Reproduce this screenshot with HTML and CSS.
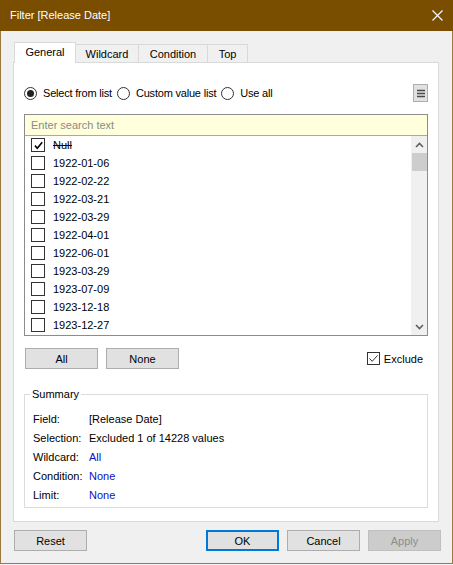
FILE: index.html
```html
<!DOCTYPE html>
<html>
<head>
<meta charset="utf-8">
<link rel="stylesheet" href="styles.css">
</head>
<body>
<div class="window">
  <div class="titlebar">
    <span class="title">Filter [Release Date]</span>
    <svg class="close" width="11" height="11" viewBox="0 0 11 11"><path d="M0.5 0.5L10.5 10.5M10.5 0.5L0.5 10.5" stroke="#fff" stroke-width="1.1" fill="none"/></svg>
  </div>
  <div class="content">
    <div class="tabs">
      <div class="tab tab-general is-active">General</div>
      <div class="tab tab-wildcard">Wildcard</div>
      <div class="tab tab-condition">Condition</div>
      <div class="tab tab-top">Top</div>
    </div>
    <div class="panel">
      <div class="radio-row">
        <label class="radio is-checked"><span class="radio-circle"><span class="radio-dot"></span></span>Select from list</label>
        <label class="radio"><span class="radio-circle"></span>Custom value list</label>
        <label class="radio"><span class="radio-circle"></span>Use all</label>
        <button class="menu-btn"><svg width="8" height="9" viewBox="0 0 8 9"><path d="M0 1.5H8M0 4.5H8M0 7.5H8" stroke="#4a4a4a" stroke-width="1.6"/></svg></button>
      </div>
      <div class="listbox">
        <div class="search">Enter search text</div>
        <div class="list-body">
          <div class="rows">
            <div class="row"><span class="cb"><svg width="11" height="11" viewBox="0 0 11 11"><path d="M2 5.6L4.3 8.2L9.2 2.2" stroke="#000" stroke-width="1.6" fill="none"/></svg></span><span class="strike">Null</span></div>
            <div class="row"><span class="cb"></span>1922-01-06</div>
            <div class="row"><span class="cb"></span>1922-02-22</div>
            <div class="row"><span class="cb"></span>1922-03-21</div>
            <div class="row"><span class="cb"></span>1922-03-29</div>
            <div class="row"><span class="cb"></span>1922-04-01</div>
            <div class="row"><span class="cb"></span>1922-06-01</div>
            <div class="row"><span class="cb"></span>1923-03-29</div>
            <div class="row"><span class="cb"></span>1923-07-09</div>
            <div class="row"><span class="cb"></span>1923-12-18</div>
            <div class="row"><span class="cb"></span>1923-12-27</div>
          </div>
          <div class="scrollbar">
            <span class="arrow"><svg width="9" height="6" viewBox="0 0 9 6"><path d="M1 5L4.5 1.5L8 5" stroke="#606060" stroke-width="1.6" fill="none"/></svg></span>
            <span class="thumb"></span>
            <span class="track"></span>
            <span class="arrow"><svg width="9" height="6" viewBox="0 0 9 6"><path d="M1 1L4.5 4.5L8 1" stroke="#606060" stroke-width="1.6" fill="none"/></svg></span>
          </div>
        </div>
      </div>
      <div class="actions">
        <button class="btn">All</button>
        <button class="btn">None</button>
        <label class="exclude"><span class="cb cb-thin"><svg width="11" height="11" viewBox="0 0 11 11"><path d="M1.5 5.5L4.2 8.3L9.6 2.4" stroke="#333" stroke-width="1" fill="none"/></svg></span>Exclude</label>
      </div>
      <fieldset class="summary">
        <legend>Summary</legend>
        <div class="sum-row"><span class="sum-label">Field:</span><span>[Release Date]</span></div>
        <div class="sum-row"><span class="sum-label">Selection:</span><span>Excluded 1 of 14228 values</span></div>
        <div class="sum-row"><span class="sum-label">Wildcard:</span><span class="link">All</span></div>
        <div class="sum-row"><span class="sum-label">Condition:</span><span class="link">None</span></div>
        <div class="sum-row"><span class="sum-label">Limit:</span><span class="link">None</span></div>
      </fieldset>
    </div>
  </div>
  <div class="footer">
    <button class="btn">Reset</button>
    <span class="grow"></span>
    <button class="btn btn-default">OK</button>
    <button class="btn">Cancel</button>
    <button class="btn btn-disabled">Apply</button>
  </div>
</div>
</body>
</html>
```

FILE: styles.css
```css
html, body {
  margin: 0;
  padding: 0;
  background: #f4f4f4;
}
body {
  font-family: "Liberation Sans", Arial, sans-serif;
  font-size: 11px;
  color: #000;
}
.window {
  width: 453px;
  height: 564px;
  box-sizing: border-box;
  border: 1px solid #9c7a3c;
  border-top: none;
  background: #f0f0f0;
  display: flex;
  flex-direction: column;
}
.titlebar {
  height: 31px;
  margin: 0 -1px;
  background: #7a4e01;
  color: #fff;
  display: flex;
  align-items: center;
  padding: 0 10px 0 10px;
  flex-shrink: 0;
}
.title {
  flex: 1;
  padding-bottom: 1px;
}
.close {
  margin-right: 0;
  margin-bottom: 1px;
}
.content {
  padding: 11px 13px 0 12px;
}
.tabs {
  display: flex;
  align-items: flex-end;
  height: 20px;
  margin-left: 1px;
}
.tab {
  box-sizing: border-box;
  height: 18px;
  border: 1px solid #d9d9d9;
  border-bottom: none;
  background: #f0f0f0;
  display: flex;
  align-items: center;
  justify-content: center;
  margin-left: -1px;
  padding-top: 1px;
}
.tab-general { width: 62px; margin-left: 0; }
.tab-wildcard { width: 64px; }
.tab-condition { width: 70px; }
.tab-top { width: 41px; }
.tab.is-active {
  height: 21px;
  margin-bottom: -1px;
  background: #fff;
  position: relative;
  z-index: 1;
  padding-top: 0;
  padding-bottom: 2px;
}
.panel {
  box-sizing: border-box;
  width: 426px;
  height: 460px;
  border: 1px solid #d9d9d9;
  background: #fff;
  padding: 21px 10px 0 10px;
}
.radio-row {
  display: flex;
  align-items: center;
  height: 18px;
  margin-bottom: 12px;
}
.radio {
  display: flex;
  align-items: center;
  margin-right: 5px;
  letter-spacing: -0.2px;
}
.radio-circle {
  box-sizing: border-box;
  width: 13px;
  height: 13px;
  border: 1px solid #333;
  border-radius: 50%;
  margin-right: 6px;
  display: flex;
  align-items: center;
  justify-content: center;
}
.radio-dot {
  width: 7px;
  height: 7px;
  border-radius: 50%;
  background: #222;
}
.menu-btn {
  margin-left: auto;
  box-sizing: border-box;
  width: 15px;
  height: 18px;
  padding: 0;
  border: 1px solid #adadad;
  background: #e1e1e1;
  display: flex;
  align-items: center;
  justify-content: center;
}
.listbox {
  border: 1px solid #8c8c8c;
}
.search {
  box-sizing: border-box;
  height: 21px;
  border-bottom: 1px solid #a8a8a8;
  background: #ffffdc;
  color: #8a8a8a;
  padding-left: 6px;
  display: flex;
  align-items: center;
}
.list-body {
  display: flex;
  height: 199px;
}
.rows {
  flex: 1;
}
.row {
  height: 18px;
  display: flex;
  align-items: center;
  padding-left: 6px;
}
.cb {
  box-sizing: border-box;
  width: 14px;
  height: 14px;
  border: 1px solid #333;
  background: #fff;
  margin-right: 8px;
  display: flex;
  align-items: center;
  justify-content: center;
}
.strike {
  text-decoration: line-through;
}
.scrollbar {
  width: 16px;
  background: #f0f0f0;
  display: flex;
  flex-direction: column;
  align-items: center;
}
.arrow {
  height: 17px;
  width: 16px;
  display: flex;
  align-items: center;
  justify-content: center;
}
.thumb {
  width: 15px;
  height: 18px;
  background: #cdcdcd;
}
.track {
  flex: 1;
}
.actions {
  display: flex;
  align-items: center;
  margin-top: 12px;
}
.btn {
  box-sizing: border-box;
  width: 73px;
  height: 21px;
  padding: 0;
  border: 1px solid #adadad;
  background: #e1e1e1;
  font-family: inherit;
  font-size: 11px;
  color: #000;
}
.actions .btn {
  margin-left: 1px;
  margin-right: 7px;
}
.exclude {
  margin-left: auto;
  margin-right: 5px;
  display: flex;
  align-items: center;
}
.cb-thin {
  width: 13px;
  height: 13px;
  margin-right: 4px;
}
.summary {
  margin: 19px 0 0 0;
  padding: 8px 0 3px 8px;
  border: 1px solid #dcdcdc;
  min-width: 0;
}
.summary legend {
  padding: 0 2px;
  margin-left: -3px;
  line-height: 13px;
}
.sum-row {
  height: 19px;
  display: flex;
  align-items: center;
}
.sum-label {
  width: 56px;
}
.link {
  color: #1010c0;
}
.footer {
  display: flex;
  margin-top: 8px;
  padding: 0 11px 0 13px;
}
.grow {
  flex: 1;
}
.footer .btn + .btn {
  margin-left: 8px;
}
.btn-default {
  border: 2px solid #0078d7;
}
.btn-disabled {
  background: #cccccc;
  border-color: #bfbfbf;
  color: #8d8d8d;
}
```
